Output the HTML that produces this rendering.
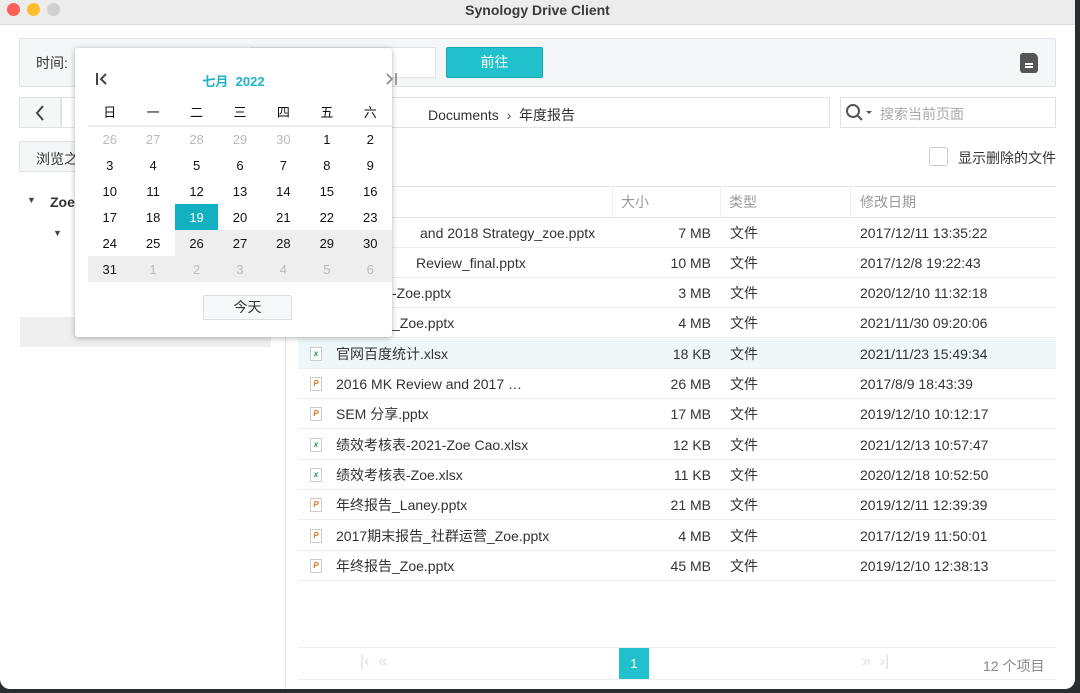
<!DOCTYPE html>
<html><head><meta charset="utf-8"><style>
*{box-sizing:border-box;margin:0;padding:0}
body{width:1080px;height:693px;background:#2a2d30;font-family:"Liberation Sans","Noto Sans CJK SC",sans-serif;font-size:14px;color:#333;position:relative;overflow:hidden}
.win{position:absolute;left:0;top:0;width:1075px;height:689px;background:#fff;border-radius:0 0 10px 10px;overflow:hidden}
.a{position:absolute}
.title{left:0;top:0;width:1075px;height:25px;background:#ececec;border-bottom:1px solid #dcdcdc;text-align:center;font-weight:bold;font-size:14px;line-height:20px;color:#3a3a3a}
.dot{width:13px;height:13px;border-radius:50%;top:3px}
.box{border:1px solid #dfe2e6;background:#f5f6f8;border-radius:2px}
.row{left:298px;width:758px;height:30px;border-bottom:1px solid #eee;line-height:30px}
.row span{position:absolute}
.ic{position:absolute;left:12px;top:8px;width:12px;height:14px;border:1px solid #ccc;background:#fff;font-size:8px;line-height:12px;text-align:center;font-weight:bold}
.cal{left:75px;top:48px;width:317px;height:289px;background:#fff;border-radius:3px;box-shadow:0 1px 6px rgba(0,0,0,.3)}
.cal td{width:46px;height:26px;text-align:center;font-size:13px;color:#111}
.cal .g{color:#bbb}
.cal .s{background:#eeeeee}
</style></head><body>
<div class="win">
<div class="a title">Synology Drive Client</div>
<div class="a dot" style="left:7px;background:#fe5f57"></div>
<div class="a dot" style="left:27px;background:#febc2e"></div>
<div class="a dot" style="left:47px;background:#d0d0d0"></div>

<div class="a box" style="left:19px;top:38px;width:1037px;height:49px"></div>
<div class="a" style="left:36px;top:53px;font-size:14px">时间:</div>
<div class="a" style="left:250px;top:47px;width:186px;height:31px;border:1px solid #dfe2e6;background:#fff"></div>
<div class="a" style="left:446px;top:47px;width:97px;height:31px;background:#20c0cd;border:1px solid #17a9b5;border-radius:2px;color:#fff;text-align:center;line-height:29px">前往</div>
<div class="a" style="left:1020px;top:53px;width:18px;height:20px;background:#555;border-radius:3px 5px 3px 3px"><div class="a" style="left:5px;top:10px;width:8px;height:1.5px;background:#fff"></div><div class="a" style="left:5px;top:13px;width:8px;height:1.5px;background:#fff"></div></div>

<div class="a" style="left:19px;top:97px;width:42px;height:31px;border:1px solid #dfe2e6;background:#f5f6f8"></div>
<svg class="a" style="left:34px;top:104px" width="12" height="18"><path d="M9 2L3 9l6 7" fill="none" stroke="#444" stroke-width="2"/></svg>
<div class="a" style="left:61px;top:97px;width:769px;height:31px;border:1px solid #dfe2e6;background:#fff"></div>
<div class="a" style="left:428px;top:105px;font-size:14px;color:#333">Documents &nbsp;<span style="color:#555">›</span>&nbsp; 年度报告</div>
<div class="a" style="left:840px;top:97px;width:216px;height:31px;border:1px solid #dfe2e6;background:#fff"></div>
<svg class="a" style="left:845px;top:103px" width="30" height="20"><circle cx="8" cy="8" r="6" fill="none" stroke="#555" stroke-width="2"/><path d="M12 12l5 5" stroke="#555" stroke-width="2"/><path d="M21 8h6l-3 3z" fill="#555"/></svg>
<div class="a" style="left:880px;top:104px;color:#aaa;font-size:14px">搜索当前页面</div>

<div class="a" style="left:19px;top:141px;width:120px;height:31px;border:1px solid #dfe2e6;background:#f5f6f8;padding:7px 0 0 16px">浏览之</div>
<div class="a" style="left:929px;top:147px;width:19px;height:19px;border:1px solid #ccc;border-radius:3px;background:#fff"></div>
<div class="a" style="left:958px;top:148px;font-size:14px">显示删除的文件</div>

<div class="a" style="left:285px;top:176px;width:1px;height:513px;background:#e5e5e5"></div>
<div class="a" style="left:27px;top:195px;font-size:9px;color:#444">▼</div>
<div class="a" style="left:50px;top:194px;font-weight:bold">Zoe</div>
<div class="a" style="left:53px;top:228px;font-size:9px;color:#444">▼</div>
<div class="a" style="left:20px;top:317px;width:251px;height:30px;background:#eeeeee"></div>

<div class="a" style="left:298px;top:186px;width:758px;height:32px;border-top:1px solid #e5e5e5;border-bottom:1px solid #e5e5e5;color:#999;line-height:30px">
<span class="a" style="left:323px">大小</span><span class="a" style="left:431px">类型</span><span class="a" style="left:562px">修改日期</span>
<div class="a" style="left:314px;top:0;width:1px;height:30px;background:#eee"></div>
<div class="a" style="left:422px;top:0;width:1px;height:30px;background:#eee"></div>
<div class="a" style="left:552px;top:0;width:1px;height:30px;background:#eee"></div>
</div>

<div class="a row" style="top:218px"><span style="left:122px">and 2018 Strategy_zoe.pptx</span><span style="right:345px">7 MB</span><span style="left:432px">文件</span><span style="left:562px">2017/12/11 13:35:22</span></div>
<div class="a row" style="top:248px"><span style="left:118px">Review_final.pptx</span><span style="right:345px">10 MB</span><span style="left:432px">文件</span><span style="left:562px">2017/12/8 19:22:43</span></div>
<div class="a row" style="top:278px"><span style="left:38px">年度报告-Zoe.pptx</span><span style="right:345px">3 MB</span><span style="left:432px">文件</span><span style="left:562px">2020/12/10 11:32:18</span></div>
<div class="a row" style="top:308px"><span style="left:38px">年终报告_Zoe.pptx</span><span style="right:345px">4 MB</span><span style="left:432px">文件</span><span style="left:562px">2021/11/30 09:20:06</span></div>
<div class="a row" style="top:339px;background:#eef8f8"><i class="ic" style="color:#1e9e4a">x</i><span style="left:38px">官网百度统计.xlsx</span><span style="right:345px">18 KB</span><span style="left:432px">文件</span><span style="left:562px">2021/11/23 15:49:34</span></div>
<div class="a row" style="top:369px"><i class="ic" style="color:#e8731c">P</i><span style="left:38px">2016 MK Review and 2017 …</span><span style="right:345px">26 MB</span><span style="left:432px">文件</span><span style="left:562px">2017/8/9 18:43:39</span></div>
<div class="a row" style="top:399px"><i class="ic" style="color:#e8731c">P</i><span style="left:38px">SEM 分享.pptx</span><span style="right:345px">17 MB</span><span style="left:432px">文件</span><span style="left:562px">2019/12/10 10:12:17</span></div>
<div class="a row" style="top:430px"><i class="ic" style="color:#1e9e4a">x</i><span style="left:38px">绩效考核表-2021-Zoe Cao.xlsx</span><span style="right:345px">12 KB</span><span style="left:432px">文件</span><span style="left:562px">2021/12/13 10:57:47</span></div>
<div class="a row" style="top:460px"><i class="ic" style="color:#1e9e4a">x</i><span style="left:38px">绩效考核表-Zoe.xlsx</span><span style="right:345px">11 KB</span><span style="left:432px">文件</span><span style="left:562px">2020/12/18 10:52:50</span></div>
<div class="a row" style="top:490px"><i class="ic" style="color:#e8731c">P</i><span style="left:38px">年终报告_Laney.pptx</span><span style="right:345px">21 MB</span><span style="left:432px">文件</span><span style="left:562px">2019/12/11 12:39:39</span></div>
<div class="a row" style="top:521px"><i class="ic" style="color:#e8731c">P</i><span style="left:38px">2017期末报告_社群运营_Zoe.pptx</span><span style="right:345px">4 MB</span><span style="left:432px">文件</span><span style="left:562px">2017/12/19 11:50:01</span></div>
<div class="a row" style="top:551px"><i class="ic" style="color:#e8731c">P</i><span style="left:38px">年终报告_Zoe.pptx</span><span style="right:345px">45 MB</span><span style="left:432px">文件</span><span style="left:562px">2019/12/10 12:38:13</span></div>

<div class="a" style="left:298px;top:647px;width:758px;height:33px;border-top:1px solid #eee;border-bottom:1px solid #eee"></div>
<div class="a" style="left:360px;top:653px;color:#ddd;font-size:16px">|‹ &nbsp;«</div>
<div class="a" style="left:862px;top:653px;color:#ddd;font-size:16px">» &nbsp;›|</div>
<div class="a" style="left:619px;top:648px;width:30px;height:31px;background:#20c0cd;color:#fff;text-align:center;line-height:31px;font-size:13px">1</div>
<div class="a" style="left:983px;top:656px;color:#888;font-size:14px">12 个项目</div>

<div class="a cal">
<svg class="a" style="left:20px;top:24px" width="14" height="14"><path d="M2 1v12M11 2L6 7l5 5" fill="none" stroke="#444" stroke-width="2"/></svg>
<svg class="a" style="left:309px;top:24px" width="14" height="14"><path d="M12 1v12M3 2l5 5-5 5" fill="none" stroke="#888" stroke-width="1.6"/></svg>
<div class="a" style="left:0;width:317px;top:23px;text-align:center;color:#20b3c3;font-weight:bold;font-size:13px">七月 &nbsp;2022</div>
<table class="a" style="left:13px;top:50px;border-collapse:collapse">
<tr style="height:28px"><td>日</td><td>一</td><td>二</td><td>三</td><td>四</td><td>五</td><td>六</td></tr>
<tr style="border-top:2px solid #eee"><td class="g">26</td><td class="g">27</td><td class="g">28</td><td class="g">29</td><td class="g">30</td><td>1</td><td>2</td></tr>
<tr><td>3</td><td>4</td><td>5</td><td>6</td><td>7</td><td>8</td><td>9</td></tr>
<tr><td>10</td><td>11</td><td>12</td><td>13</td><td>14</td><td>15</td><td>16</td></tr>
<tr><td>17</td><td>18</td><td style="background:#12b1c1;color:#fff">19</td><td>20</td><td>21</td><td>22</td><td>23</td></tr>
<tr><td>24</td><td>25</td><td class="s">26</td><td class="s">27</td><td class="s">28</td><td class="s">29</td><td class="s">30</td></tr>
<tr><td class="s">31</td><td class="s g">1</td><td class="s g">2</td><td class="s g">3</td><td class="s g">4</td><td class="s g">5</td><td class="s g">6</td></tr>
</table>
<div class="a" style="left:128px;top:247px;width:89px;height:25px;border:1px solid #ddd;border-radius:2px;background:#f7f8f9;text-align:center;line-height:23px;font-size:14px">今天</div>
</div>
</div>
</body></html>
